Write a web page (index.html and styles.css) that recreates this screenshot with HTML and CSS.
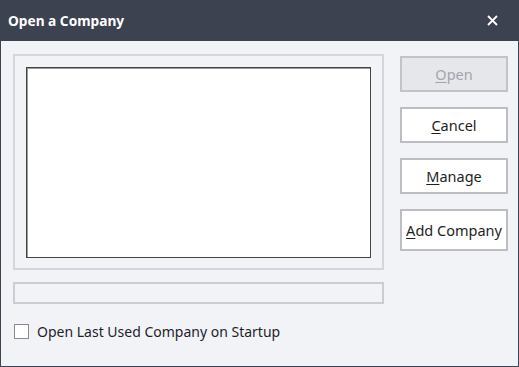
FILE: index.html
```html
<!DOCTYPE html>
<html>
<head>
<meta charset="utf-8">
<link rel="stylesheet" href="styles.css">
</head>
<body>
<div class="window">
  <div class="titlebar">
    <span class="title">Open a Company</span>
    <svg class="close" width="11" height="11" viewBox="0 0 11 11"><path d="M1 1 L10 10 M10 1 L1 10" stroke="#ffffff" stroke-width="1.8" fill="none"/></svg>
  </div>
  <div class="content">
    <div class="left">
      <div class="group">
        <div class="list"></div>
      </div>
      <div class="progress"></div>
      <label class="check">
        <span class="box"></span>
        <span class="label">Open Last Used Company on Startup</span>
      </label>
    </div>
    <div class="buttons">
      <div class="btn disabled"><span class="u">O</span>pen</div>
      <div class="btn"><span class="u">C</span>ancel</div>
      <div class="btn"><span class="u">M</span>anage</div>
      <div class="btn tall"><span class="u">A</span>dd Company</div>
    </div>
  </div>
</div>
</body>
</html>
```
FILE: styles.css
```css
* { box-sizing: border-box; }
html, body { margin: 0; padding: 0; }
body {
  width: 519px;
  height: 367px;
  font-family: "Noto Sans", "Open Sans", sans-serif;
  font-size: 14px;
  color: #1e1e1e;
  overflow: hidden;
}
.window {
  width: 519px;
  height: 367px;
  background: #f2f3f7;
  border: 1px solid #3d4250;
  border-top: none;
  display: flex;
  flex-direction: column;
}
.titlebar {
  height: 41px;
  background: #3d4250;
  margin: 0 -1px;
  display: flex;
  align-items: center;
  justify-content: space-between;
  padding: 0 21px 0 8px;
}
.title {
  color: #ffffff;
  font-weight: bold;
  font-size: 13.7px;
}
.content {
  display: flex;
  padding: 13px 0 0 12px;
}
.left {
  width: 371px;
  display: flex;
  flex-direction: column;
}
.group {
  height: 216px;
  border: 2px solid #d4d6dc;
  padding: 11px;
}
.list {
  width: 345px;
  height: 191px;
  background: #ffffff;
  border: 1px solid #444444;
  box-shadow: inset 1px 1px 0 #9a9a9a;
}
.progress {
  margin-top: 12px;
  height: 22px;
  border: 2px solid #cbcdd3;
}
.check {
  margin-top: 18px;
  margin-left: 1px;
  display: flex;
  align-items: center;
  gap: 8px;
}
.box {
  width: 15px;
  height: 15px;
  border: 1px solid #8a8a8a;
  background: #ffffff;
}
.label {
  color: #1e1e2a;
  font-size: 14px;
}
.buttons {
  margin-left: 16px;
  padding-top: 2px;
  display: flex;
  flex-direction: column;
  gap: 15px;
  width: 108px;
}
.btn {
  height: 36px;
  border: 2px solid #bdbec4;
  background: #ffffff;
  display: flex;
  align-items: center;
  justify-content: center;
  font-size: 14.5px;
  color: #1e1e1e;
}
.btn.tall { height: 42px; }
.btn.disabled {
  background: #e6e7eb;
  color: #a3a4ab;
  border-color: #c2c3c9;
}
.u { text-decoration: underline; text-underline-offset: 2px; }
```
